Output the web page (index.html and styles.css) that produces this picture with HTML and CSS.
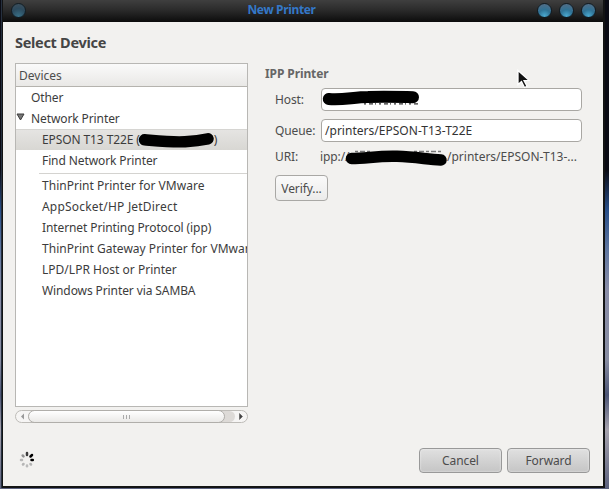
FILE: index.html
```html
<!DOCTYPE html>
<html lang="en">
<head>
<meta charset="utf-8">
<title>New Printer</title>
<link rel="stylesheet" href="styles.css">
</head>
<body>
<div class="window">
  <header class="titlebar">
    <span class="orb orb-dim"></span>
    <h1 class="title">New Printer</h1>
    <div class="orbs"><span class="orb"></span><span class="orb"></span><span class="orb"></span></div>
  </header>
  <main class="content">
    <h2 class="heading">Select Device</h2>
    <div class="columns">
      <section class="sidebar">
        <div class="tree">
          <div class="tree-head">Devices</div>
          <div class="row top">Other</div>
          <div class="row top"><svg class="expander" width="9" height="8" viewBox="0 0 9 8"><path d="M1 1h7L4.5 7z" fill="#777" stroke="#3c3c3c"/></svg>Network Printer</div>
          <div class="row selected">EPSON T13 T22E (<span class="hidden-name"></span>)
            <svg class="scribble" width="78" height="16" viewBox="0 0 78 16"><path d="M7.500 6.800C22 8 37 9.500 48 8.700C58 8 65 7 71 5.800" fill="none" stroke="#000" stroke-width="11.500" stroke-linecap="round"/></svg>
          </div>
          <div class="row">Find Network Printer</div>
          <div class="separator"></div>
          <div class="row wide">ThinPrint Printer for VMware</div>
          <div class="row wider">AppSocket/HP JetDirect</div>
          <div class="row">Internet Printing Protocol (ipp)</div>
          <div class="row wide">ThinPrint Gateway Printer for VMware</div>
          <div class="row wide">LPD/LPR Host or Printer</div>
          <div class="row">Windows Printer via SAMBA</div>
        </div>
        <div class="scrollbar">
          <svg class="arrow" width="12" height="11" viewBox="0 0 12 11"><path d="M8 2.500v6L5 5.500z" fill="#999"/></svg>
          <div class="trough"><div class="thumb"><i></i><i></i><i></i></div></div>
          <svg class="arrow" width="12" height="11" viewBox="0 0 12 11"><path d="M4.500 2.500v6l3-3z" fill="#444" stroke="#444" stroke-width=".5"/></svg>
        </div>
      </section>
      <section class="details">
        <h3 class="subheading">IPP Printer</h3>
        <div class="fields">
          <label>Host:</label>
          <div class="entry">
            <svg class="scribble" width="104" height="22" viewBox="0 0 104 22"><path d="M42 14.800H97" stroke="#333" stroke-width="1.200" stroke-dasharray="2 3 4 2 1 3"/><path d="M6.800 10C20 11.500 32 8 46 8C65 7.500 80 8 91 8.200" fill="none" stroke="#000" stroke-width="12" stroke-linecap="round"/></svg>
          </div>
          <label>Queue:</label>
          <div class="entry queue">/printers/EPSON-T13-T22E</div>
          <label class="uri">URI:</label>
          <div class="uri"><span class="uri-start">ipp://</span><span class="uri-end">/printers/EPSON-T13-...</span>
            <svg class="scribble" width="106" height="20" viewBox="0 0 106 20"><path d="M12 3.500H28M71 3.500H99" stroke="#777" stroke-width="1.500" stroke-dasharray="3 2 5 2"/><path d="M8.500 10.500C24 10.500 34 7.700 54 8.300C72 9 83 11 98 12" fill="none" stroke="#000" stroke-width="11.500" stroke-linecap="round"/></svg>
          </div>
        </div>
        <button class="verify">Verify...</button>
      </section>
    </div>
    <footer class="footer">
      <svg class="spinner" width="16" height="18" viewBox="-8 -9 16 18">
        <g stroke-width="2.500" stroke-linecap="round">
          <path d="M0-5V-7" stroke="#3b3b3b"/><path d="M3.500-3.500L5-5" stroke="#000"/><path d="M4.500 0H5.800" stroke="#000"/>
          <path d="M3.500 4L4 4.500" stroke="#b4b4b4"/><path d="M0 5.500V6.200" stroke="#bbb"/><path d="M-3.500 4L-4 4.500" stroke="#b5b5b5"/><path d="M-5 0H-6" stroke="#b8b8b8"/><path d="M-3.500-3.700L-4.300-4.500" stroke="#909090"/>
        </g>
      </svg>
      <div class="actions"><button class="action">Cancel</button><button class="action forward">Forward</button></div>
    </footer>
  </main>
  <svg class="cursor" width="17" height="22" viewBox="0 0 17 22"><path d="M2 1.500V15.500L5.500 12.500L8.500 18.500L11 17.300L8 11.500L13 11.300Z" fill="#111" stroke="#fff" stroke-width="1.300"/></svg>
</div>
</body>
</html>
```
FILE: styles.css
```css
* { box-sizing: border-box; }
body {
  margin: 0; width: 609px; height: 489px; overflow: hidden;
  padding: 0 4px 1px 1px;
  background: linear-gradient(180deg, #0a0b14 0, #0a0b14 170px, #294f89 210px, #6077a0 250px, #8a8ea8 290px, #888da2 360px, #4c5575 395px, #a6a3ae 430px, #5b617e 489px);
  font: 12px/21px "Noto Sans", sans-serif; letter-spacing: -.1px; color: #3c3c3c;
}
h1, h2, h3 { margin: 0; }
.window { position: relative; height: 488px; background: #131414; border-left: 1px solid #26303f; padding: 0 2px 2px 1px; }
.titlebar { display: flex; align-items: center; height: 22px; padding: 0 7px 2px 8px; background: linear-gradient(#3f3f3f, #2b2b2b 45%, #0c0c0c); }
.title { flex: 1; font-size: 12px; line-height: 20px; text-align: center; color: #3478c8; letter-spacing: -.35px; }
.orbs { display: flex; gap: 7px; }
.orb { width: 15px; height: 15px; border-radius: 50%; border: 1px solid #101b22; background: radial-gradient(circle at 50% 90%, #4aa8cf, #2f7295 45%, #536d85 90%); }
.orb-dim { background: radial-gradient(circle at 50% 95%, #397087, #2c4a5d 55%, #41505c); border-color: #111e25; }
.content { height: 464px; background: #f2f1ef; padding: 0 13px 13px 12px; }
.heading { height: 41px; padding-top: 9px; font-size: 14.5px; line-height: 22px; letter-spacing: -.3px; color: #454545; }
.columns { display: flex; gap: 17px; height: 362px; }
.sidebar { width: 233px; }
.tree { height: 344px; border: 1px solid #b8b7b4; background: #fff; overflow: hidden; white-space: nowrap; }
.tree-head { height: 23px; padding-left: 3px; line-height: 23px; letter-spacing: 0; border-bottom: 1px solid #b5b3ae; background: linear-gradient(#fafafa, #e9e8e6); color: #4d4d4d; }
.row { position: relative; height: 21px; padding-left: 26px; }
.top { padding-left: 15px; }
.wide { letter-spacing: .02px; }
.wider { letter-spacing: .2px; }
.expander { position: absolute; left: 0; top: 5px; }
.selected { background: linear-gradient(#e5e4e2, #d8d7d3); border-top: 1px solid #d6d5d2; line-height: 20px; }
.hidden-name { display: inline-block; width: 74px; }
.scribble { position: absolute; }
.selected .scribble { left: 121px; top: 3px; }
.separator { height: 4px; margin-left: 23px; padding-top: 2px; }
.separator::before { content: ""; display: block; height: 1px; background: #d4d3d0; }
.scrollbar { display: flex; margin-top: 3px; height: 13px; border: 1px solid #bebcb8; border-radius: 7px; background: #f6f5f4; }
.arrow { flex: none; }
.trough { flex: 1; background: #dddad7; border-radius: 6px; }
.thumb { display: flex; align-items: center; justify-content: center; gap: 2px; width: 197px; height: 13px; margin-top: -1px; border: 1px solid #b0aeaa; border-radius: 7px; background: linear-gradient(#fff, #eae9e7); }
.thumb i { width: 1px; height: 4px; background: #aaa; }
.details { flex: 1; }
.subheading { height: 21px; font-size: 12px; line-height: 21px; color: #666; }
.fields { display: grid; grid-template-columns: 46px 261px; grid-template-rows: 23px 23px 21px; row-gap: 8px; margin: 4px 0 0 10px; line-height: 23px; color: #4c4c4c; }
.entry { position: relative; border: 1px solid #a9a7a3; border-radius: 4px; background: #fff; padding-left: 3px; line-height: 21px; color: #333; }
.queue { letter-spacing: .02px; }
.entry .scribble { left: 0; top: 0; }
.uri { position: relative; margin-top: -5px; white-space: nowrap; }
.uri-start { display: inline-block; width: 127px; margin-left: -1px; }
.uri-end { letter-spacing: 0; }
.uri .scribble { left: 22px; top: 3px; }
button { font: inherit; letter-spacing: inherit; padding: 0; color: #4c4c4c; border: 1px solid #a9a8a5; border-radius: 4px; }
.verify { display: block; width: 53px; height: 26px; margin: 4px 0 0 10px; background: linear-gradient(#fafafa, #ececeb); }
.footer { display: flex; justify-content: space-between; align-items: flex-start; padding-top: 23px; }
.spinner { margin: 3px 0 0 4px; }
.actions { display: flex; gap: 5px; }
.action { width: 83px; height: 25px; border-color: #999; background: linear-gradient(#e0e0e0, #c5c5c5); box-shadow: inset 0 0 2px #f4f4f4; }
.cursor { position: absolute; left: 514px; top: 69px; }
```
